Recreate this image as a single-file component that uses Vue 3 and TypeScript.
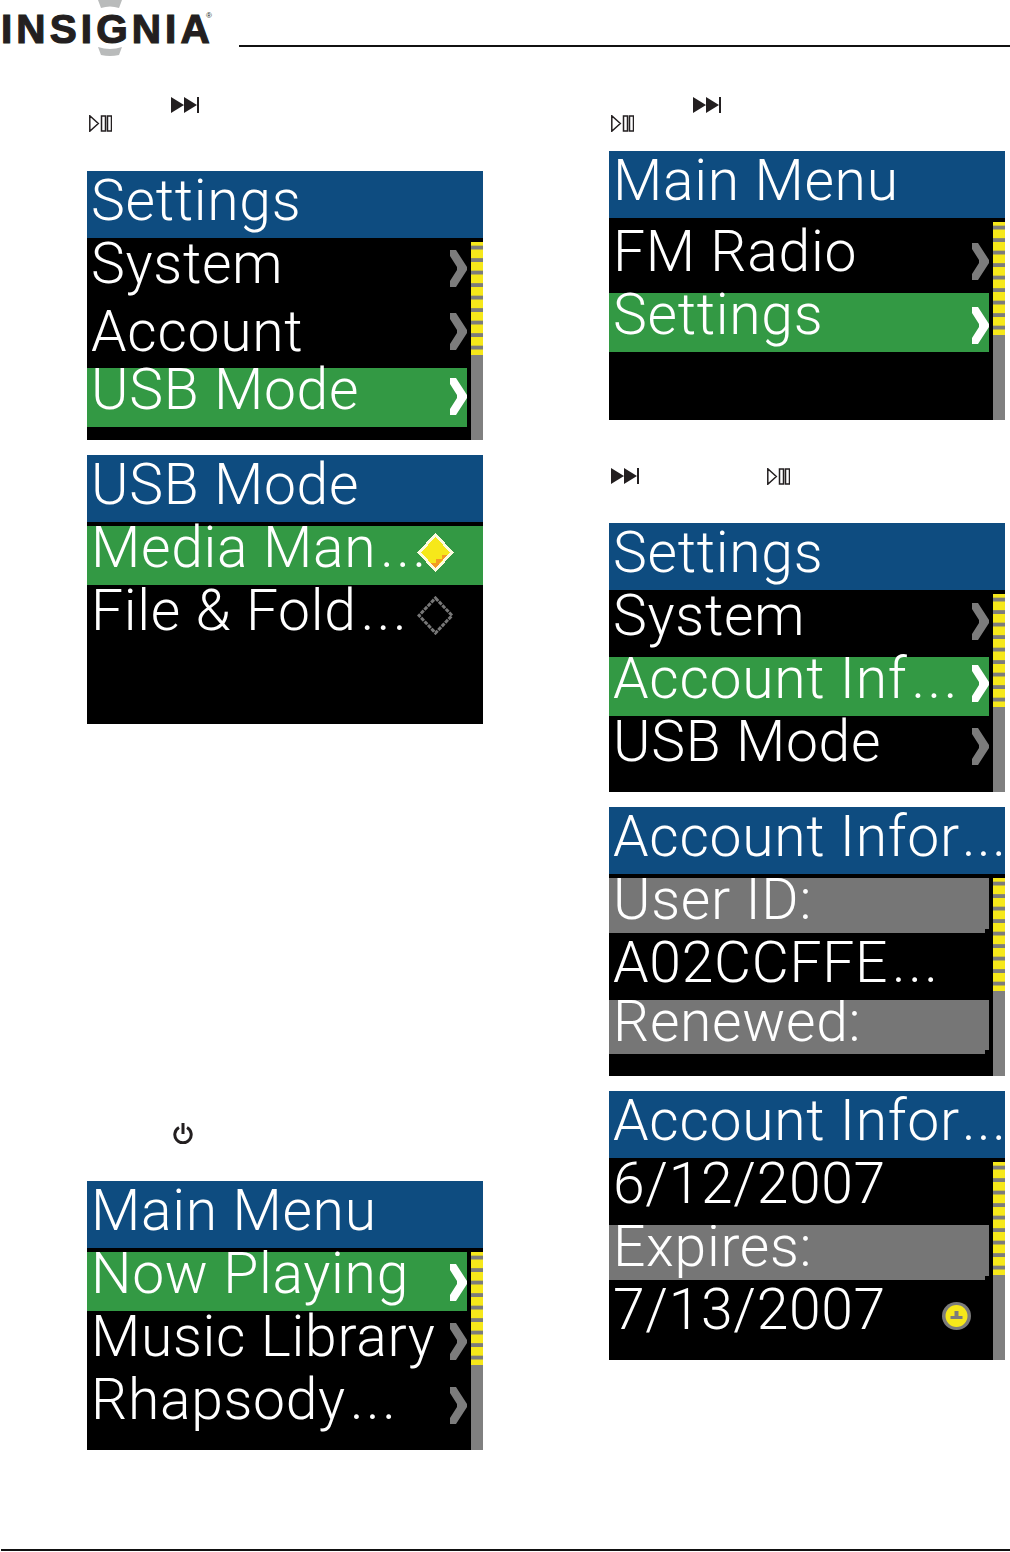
<script setup lang="ts">
type Row = {
  label: string
  kind?: 'on' | 'gray'
  h: number
  gap?: number
  mark?: 'arrow' | 'radio' | 'radioOn' | 'alarm'
  markY?: number
}

type Block =
  | { type: 'screen'; title: string; rows: Row[]; top: number; noTrack?: boolean }
  | { type: 'ffPlay'; left: number }
  | { type: 'ffThenPlay' }
  | { type: 'power' }

const columns: Block[][] = [
  [
    { type: 'ffPlay', left: 84 },
    {
      type: 'screen',
      title: 'Settings',
      top: 39,
      rows: [
        { label: 'System', h: 59, mark: 'arrow', markY: 8 },
        { label: 'Account', h: 58, gap: 9, mark: 'arrow', markY: 3 },
        { label: 'USB Mode', kind: 'on', h: 59, mark: 'arrow', markY: 10 },
      ],
    },
    {
      type: 'screen',
      title: 'USB Mode',
      top: 15,
      noTrack: true,
      rows: [
        { label: 'Media Man...', kind: 'on', h: 59, mark: 'radioOn', markY: 7 },
        { label: 'File & Fold...', h: 59, gap: 4, mark: 'radio', markY: 7 },
      ],
    },
    { type: 'power' },
    {
      type: 'screen',
      title: 'Main Menu',
      top: 37,
      rows: [
        { label: 'Now Playing', kind: 'on', h: 59, mark: 'arrow', markY: 12 },
        { label: 'Music Library', h: 59, gap: 4, mark: 'arrow', markY: 8 },
        { label: 'Rhapsody...', h: 59, gap: 4, mark: 'arrow', markY: 9 },
      ],
    },
  ],
  [
    { type: 'ffPlay', left: 84 },
    {
      type: 'screen',
      title: 'Main Menu',
      top: 19,
      rows: [
        { label: 'FM Radio', h: 63, gap: 8, mark: 'arrow', markY: 13 },
        { label: 'Settings', kind: 'on', h: 59, mark: 'arrow', markY: 14 },
      ],
    },
    { type: 'ffThenPlay' },
    {
      type: 'screen',
      title: 'Settings',
      top: 38,
      rows: [
        { label: 'System', h: 59, mark: 'arrow', markY: 9 },
        { label: 'Account Inf...', kind: 'on', h: 59, gap: 4, mark: 'arrow', markY: 8 },
        { label: 'USB Mode', h: 59, gap: 4, mark: 'arrow', markY: 8 },
      ],
    },
    {
      type: 'screen',
      title: 'Account Infor...',
      top: 15,
      rows: [
        { label: 'User ID:', kind: 'gray', h: 55 },
        { label: 'A02CCFFE...', h: 59, gap: 8 },
        { label: 'Renewed:', kind: 'gray', h: 54 },
      ],
    },
    {
      type: 'screen',
      title: 'Account Infor...',
      top: 15,
      rows: [
        { label: '6/12/2007', h: 59 },
        { label: 'Expires:', kind: 'gray', h: 55, gap: 4 },
        { label: '7/13/2007', h: 59, gap: 8, mark: 'alarm', markY: 14 },
      ],
    },
  ],
]

const stem = (text: string) => text.replace(/\.\.\.$/, '')
const hasDots = (text: string) => text.endsWith('...')
</script>

<template>
  <div class="page">
    <header class="top">
      <div class="logo">
        <svg class="logo-arcs" width="40" height="56" viewBox="0 0 40 56">
          <path d="M8 0h24l-3 8q-9-3-18 0z" fill="#b9bbbb" />
          <path d="M8 47q12 4 24 0l-3 8q-9 2-18 0z" fill="#b9bbbb" />
        </svg>
        <span class="logo-word">INSIGNIA</span><span class="logo-reg">®</span>
      </div>
      <div class="top-rule"></div>
    </header>

    <main class="cols">
      <section v-for="(blocks, c) in columns" :key="c" class="col">
        <template v-for="(block, b) in blocks" :key="b">
          <template v-if="block.type === 'ffPlay'">
            <svg class="key" :style="{ marginLeft: block.left + 'px' }" width="28" height="16" viewBox="0 0 28 16"><path d="M0 0l13 8L0 16zM13 0l13 8-13 8zM26 0h2v16h-2z" /></svg>
            <svg class="key pp" width="23" height="17" viewBox="0 0 23 17"><path d="M.8.8l8.500 7.700-8.500 7.700zM12.500 1h4v15h-4zM18.500 1h4v15h-4z" /></svg>
          </template>

          <div v-else-if="block.type === 'ffThenPlay'" class="keys-row">
            <svg class="key" width="28" height="16" viewBox="0 0 28 16"><path d="M0 0l13 8L0 16zM13 0l13 8-13 8zM26 0h2v16h-2z" /></svg>
            <svg class="key pp" width="23" height="17" viewBox="0 0 23 17"><path d="M.8.8l8.500 7.700-8.500 7.700zM12.500 1h4v15h-4zM18.500 1h4v15h-4z" /></svg>
          </div>

          <svg v-else-if="block.type === 'power'" class="key power" width="20" height="21" viewBox="0 0 20 21"><path d="M6 4.500a8.200 8.200 0 1 0 8 0" fill="none" stroke="#231f20" stroke-width="3" /><path d="M10 0v11" stroke="#231f20" stroke-width="3" /></svg>

          <div v-else class="screen" :style="{ marginTop: block.top + 'px' }">
            <div class="title">{{ stem(block.title) }}<span v-if="hasDots(block.title)" class="dots">...</span></div>
            <div class="body">
              <div class="list">
                <div
                  v-for="row in block.rows"
                  :key="row.label"
                  class="row"
                  :class="row.kind"
                  :style="{ height: row.h + 'px', marginTop: (row.gap ?? 0) + 'px' }"
                >
                  <span class="label">{{ stem(row.label) }}<span v-if="hasDots(row.label)" class="dots">...</span></span>
                  <svg v-if="row.mark === 'arrow'" class="arrow" :style="{ marginTop: row.markY + 'px' }" width="17" height="37" viewBox="0 0 17 37"><path d="M0 0h6l11 17v3L6 37H0v-6l7-11v-3L0 6z" /></svg>
                  <svg v-else-if="row.mark === 'radioOn'" class="radio" :style="{ marginTop: row.markY + 'px' }" width="37" height="39" viewBox="0 0 37 39" shape-rendering="crispEdges"><path d="M18.500 0L37 19.500 18.500 39 0 19.500z" fill="#fdfbe0" /><path d="M18.500 4L33 19.500 18.500 35 4 19.500z" fill="#f6e81a" /><path d="M30 22L18.500 35l-5-5h5v-4h6v-4z" fill="#f39a22" /></svg>
                  <svg v-else-if="row.mark === 'radio'" class="radio" :style="{ marginTop: row.markY + 'px' }" width="37" height="39" viewBox="0 0 37 39"><path d="M18.500 2L35 19.500 18.500 37 2 19.500z" fill="none" stroke="#777" stroke-width="3" stroke-dasharray="4 1" /></svg>
                  <svg v-else-if="row.mark === 'alarm'" class="alarm" :style="{ marginTop: row.markY + 'px' }" width="29" height="28" viewBox="0 0 29 28"><ellipse cx="14.500" cy="14" rx="14.500" ry="14" fill="#7c7c7c" /><circle cx="14.500" cy="14" r="11" fill="#f6e81a" /><path d="M8.500 17h12v-3h-4V9h-4v5h-4z" fill="#7c7c7c" /></svg>
                </div>
              </div>
              <div v-if="!block.noTrack" class="track"><div class="thumb"></div></div>
            </div>
          </div>
        </template>
      </section>
    </main>

    <footer class="bottom-rule"></footer>
  </div>
</template>

<style scoped>
.page {
  height: 1552px;
  display: flex;
  flex-direction: column;
  background: #fff;
  font-family: Roboto, "Liberation Sans", sans-serif;
}

.top {
  height: 56px;
  display: flex;
  flex-shrink: 0;
}

.logo {
  position: relative;
  width: 238px;
  padding-left: 1px;
  font-family: "Liberation Sans", sans-serif;
}

.logo-word {
  display: block;
  font-size: 40.500px;
  font-weight: 700;
  line-height: 58px;
  letter-spacing: 4.100px;
  color: #231f20;
  -webkit-text-stroke: 1.200px #231f20;
}

.logo-reg {
  position: absolute;
  left: 206px;
  top: 11px;
  font-size: 8px;
  color: #231f20;
}

.logo-arcs {
  position: absolute;
  left: 90px;
  top: 0;
}

.top-rule {
  flex: 1;
  height: 2px;
  margin-top: 45px;
  background: #111;
}

.cols {
  flex: 1;
  display: flex;
  gap: 126px;
  padding: 41px 0 0 87px;
}

.col {
  width: 396px;
  display: flex;
  flex-direction: column;
}

.key {
  display: block;
  flex-shrink: 0;
  fill: #231f20;
}

.pp {
  margin: 2px 0 0 2px;
  fill: none;
  stroke: #231f20;
  stroke-width: 1.500;
}

.power {
  margin: 399px 0 0 86px;
}

.keys-row {
  display: flex;
  align-items: center;
  gap: 128px;
  height: 18px;
  margin: 47px 0 0 2px;
}

.keys-row .pp {
  margin: 0;
}

.screen {
  height: 269px;
  display: flex;
  flex-direction: column;
  flex-shrink: 0;
  background: #000;
}

.title {
  height: 67px;
  flex-shrink: 0;
  padding-left: 4px;
  background: #0e4c80;
  color: #fff;
  font-size: 57px;
  font-weight: 300;
  line-height: 60px;
  letter-spacing: 0.700px;
  white-space: nowrap;
}

.body {
  flex: 1;
  display: flex;
  gap: 4px;
  padding-top: 4px;
  min-height: 0;
}

.list {
  flex: 1;
  min-width: 0;
}

.row {
  display: flex;
  align-items: flex-start;
  padding-left: 4px;
  color: #fff;
  fill: #7c7c7c;
}

.row.on {
  background: #339944;
  fill: #fff;
}

.row.gray {
  background: #767676;
  clip-path: polygon(0 0, 100% 0, 100% calc(100% - 4px), calc(100% - 4px) calc(100% - 4px), calc(100% - 4px) 100%, 0 100%);
}

.label {
  flex: 1;
  min-width: 0;
  font-size: 57px;
  font-weight: 300;
  line-height: 44px;
  letter-spacing: 0.700px;
  white-space: nowrap;
}

.dots {
  margin-left: 4px;
  letter-spacing: 2.500px;
}

.title .dots {
  margin-left: 2px;
  letter-spacing: 1.500px;
}

.arrow {
  flex-shrink: 0;
  display: block;
}

.radio {
  flex-shrink: 0;
  display: block;
  margin-right: 29px;
}

.alarm {
  flex-shrink: 0;
  display: block;
  margin-right: 18px;
}

.track {
  width: 12px;
  flex-shrink: 0;
  background: #808080;
}

.thumb {
  height: 113px;
  background: linear-gradient(#f6e81a 0 8.500px, #7c7c7c 8.500px 12.500px) 0 -5px / 100% 12.500px;
}

.bottom-rule {
  height: 2px;
  flex-shrink: 0;
  margin: 0 0 1px 1px;
  background: #111;
}
</style>

<style>
html,
body {
  margin: 0;
  background: #fff;
}
</style>
